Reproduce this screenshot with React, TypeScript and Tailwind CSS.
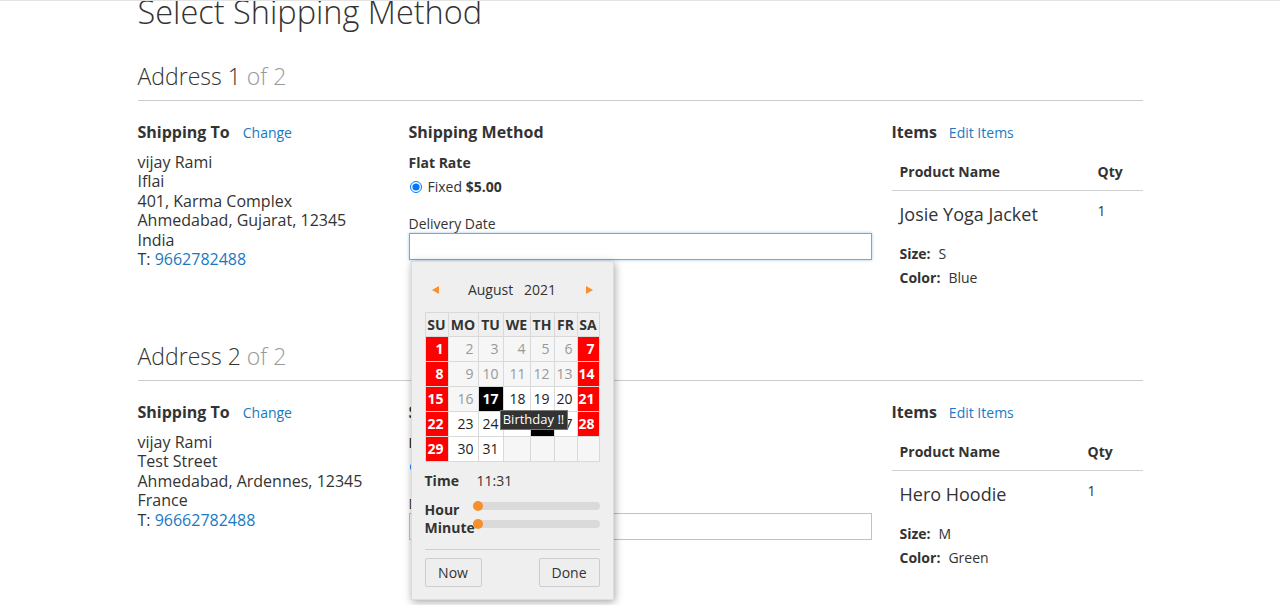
import React from "react";

// ==========================================
// Data
// ==========================================
type Addr = {
  n: number;
  lines: string[];
  phone: string;
  product: string;
  size: string;
  color: string;
  nameCol: string;
};

const addresses: Addr[] = [
  {
    n: 1,
    lines: ["vijay Rami", "Iflai", "401, Karma Complex", "Ahmedabad, Gujarat, 12345", "India"],
    phone: "9662782488",
    product: "Josie Yoga Jacket",
    size: "S",
    color: "Blue",
    nameCol: "w-[206px]",
  },
  {
    n: 2,
    lines: ["vijay Rami", "Test Street", "Ahmedabad, Ardennes, 12345", "France"],
    phone: "96662782488",
    product: "Hero Hoodie",
    size: "M",
    color: "Green",
    nameCol: "w-[196px]",
  },
];

type Cell = { d?: number; k: "red" | "off" | "on" | "black" | "empty" };

const weeks: Cell[][] = [
  [{ d: 1, k: "red" }, { d: 2, k: "off" }, { d: 3, k: "off" }, { d: 4, k: "off" }, { d: 5, k: "off" }, { d: 6, k: "off" }, { d: 7, k: "red" }],
  [{ d: 8, k: "red" }, { d: 9, k: "off" }, { d: 10, k: "off" }, { d: 11, k: "off" }, { d: 12, k: "off" }, { d: 13, k: "off" }, { d: 14, k: "red" }],
  [{ d: 15, k: "red" }, { d: 16, k: "off" }, { d: 17, k: "black" }, { d: 18, k: "on" }, { d: 19, k: "on" }, { d: 20, k: "on" }, { d: 21, k: "red" }],
  [{ d: 22, k: "red" }, { d: 23, k: "on" }, { d: 24, k: "on" }, { d: 25, k: "on" }, { d: 26, k: "black" }, { d: 27, k: "on" }, { d: 28, k: "red" }],
  [{ d: 29, k: "red" }, { d: 30, k: "on" }, { d: 31, k: "on" }, { k: "empty" }, { k: "empty" }, { k: "empty" }, { k: "empty" }],
];

const dayNames = ["SU", "MO", "TU", "WE", "TH", "FR", "SA"];
const colW = ["w-[23px]", "w-[30px]", "w-[25px]", "w-[27px]", "w-[24px]", "w-[23px]", "w-[22px]"];

const cellCls: Record<Cell["k"], string> = {
  red: "bg-[#ff0000] text-white font-bold",
  off: "bg-[#f6f6f6] text-[#999]",
  on: "bg-white text-[#222]",
  black: "bg-black text-white font-bold",
  empty: "bg-[#f6f6f6]",
};

// ==========================================
// Datepicker popup
// ==========================================
function Slider() {
  return (
    <div className="relative mt-[1px] h-[8px] flex-1 rounded-full bg-[#dadada]">
      <span className="absolute left-0 top-[-1px] h-[10px] w-[10px] rounded-full bg-[#f7902c]" />
    </div>
  );
}

function Datepicker() {
  return (
    <div className="absolute left-[2px] top-full z-10 mt-[1px] w-[203px] border border-[#dcdcdc] bg-[#efefef] px-[13px] pb-[12px] pt-[13px] shadow-[1px_2px_8px_rgba(0,0,0,0.35)]">
      <div className="flex h-[30px] items-center justify-between px-[7px]">
        <svg width="7" height="8" viewBox="0 0 7 8">
          <polygon points="7,0 7,8 0,4" fill="#f7902c" />
        </svg>
        <span className="text-[14px] text-[#333]">
          August&nbsp;&nbsp; 2021
        </span>
        <svg width="7" height="8" viewBox="0 0 7 8">
          <polygon points="0,0 0,8 7,4" fill="#f7902c" />
        </svg>
      </div>

      <div className="relative mt-[7px]">
        <table className="border-collapse text-[14px]">
          <thead>
            <tr>
              {dayNames.map((d, i) => (
                <th key={d} className={`${colW[i]} h-[24px] border border-[#d9d9d9] bg-[#efefef] p-0 text-center font-bold text-[#333]`}>
                  {d}
                </th>
              ))}
            </tr>
          </thead>
          <tbody>
            {weeks.map((w, wi) => (
              <tr key={wi}>
                {w.map((c, ci) => (
                  <td key={ci} className={`h-[25px] border border-[#d9d9d9] p-0 pr-[4px] text-right ${cellCls[c.k]}`}>
                    {c.d ?? ""}
                  </td>
                ))}
              </tr>
            ))}
          </tbody>
        </table>
        <div className="absolute left-[75px] top-[98px] flex h-[20px] w-[68px] items-center justify-center border border-[#777] bg-[#333] text-[13px] text-white">
          Birthday !!
        </div>
      </div>

      <div className="mt-[9px] flex text-[14px] leading-[20px]">
        <span className="w-[52px] font-bold">Time</span>
        <span>11:31</span>
      </div>
      <div className="mt-[10px] text-[14px] leading-[18px]">
        <div className="flex items-start">
          <span className="w-[48px] font-bold">Hour</span>
          <Slider />
        </div>
        <div className="flex items-start">
          <span className="w-[48px] font-bold">Minute</span>
          <Slider />
        </div>
      </div>

      <div className="mt-[12px] border-t border-[#cfcfcf]" />
      <div className="mt-[8px] flex justify-between">
        <button className="h-[29px] w-[57px] rounded-[2px] border border-[#cdcdcd] bg-[#eeeeee] text-[14px] text-[#333]">
          Now
        </button>
        <button className="h-[29px] w-[61px] rounded-[2px] border border-[#cdcdcd] bg-[#eeeeee] text-[14px] text-[#333]">
          Done
        </button>
      </div>
    </div>
  );
}

// ==========================================
// Address block
// ==========================================
function AddressBlock({ a, picker }: { a: Addr; picker?: boolean }) {
  return (
    <section>
      <h2 className="border-b border-[#cccccc] pb-[10px] text-[23px] font-light leading-[28px] text-[#333]">
        Address {a.n} <span className="text-[#999]">of 2</span>
      </h2>

      <div className="mt-[21px] flex">
        {/* SHIPPING TO */}
        <div className="w-[271px] shrink-0">
          <div className="flex items-baseline gap-[13px] leading-[20px]">
            <strong className="text-[16px] font-bold">Shipping To</strong>
            <a className="text-[14px] text-[#1979c3]">Change</a>
          </div>
          <address className="mt-[10px] text-[16px] not-italic leading-[19.5px]">
            {a.lines.map((l) => (
              <div key={l}>{l}</div>
            ))}
            <div>
              T: <a className="text-[#1979c3]">{a.phone}</a>
            </div>
          </address>
        </div>

        {/* SHIPPING METHOD */}
        <div className="w-[483px] shrink-0 pr-[20px]">
          <strong className="block text-[16px] font-bold leading-[20px]">Shipping Method</strong>
          <div className="mt-[11px] text-[14px] font-bold leading-[20px]">Flat Rate</div>
          <label className="mt-[4px] flex items-center gap-[6px] text-[14px] leading-[20px]">
            <input type="radio" checked readOnly className="m-0 ml-[1px] h-[12px] w-[12px]" />
            <span>
              Fixed <b>$5.00</b>
            </span>
          </label>
          <div className="mt-[17px] text-[14px] leading-[20px]">Delivery Date</div>
          <div className="relative mt-[-1px]">
            <input
              className={`block h-[27px] w-full bg-white px-2 text-[14px] outline-none ${
                picker
                  ? "border border-[#7aa7cf] shadow-[0_0_3px_rgba(104,168,224,0.6)]"
                  : "border border-[#c2c2c2]"
              }`}
              readOnly
            />
            {picker && <Datepicker />}
          </div>
        </div>

        {/* ITEMS */}
        <div className="flex-1">
          <div className="flex items-baseline gap-[12px] leading-[20px]">
            <strong className="text-[16px] font-bold">Items</strong>
            <a className="text-[14px] text-[#1979c3]">Edit Items</a>
          </div>
          <table className="mt-[10px] w-full border-collapse text-[14px] text-[#333]">
            <thead>
              <tr className="border-b border-[#d1d1d1]">
                <th className={`${a.nameCol} pb-[8px] pl-[8px] pt-[9px] text-left font-bold leading-[20px]`}>Product Name</th>
                <th className="pb-[8px] pt-[9px] text-left font-bold leading-[20px]">Qty</th>
              </tr>
            </thead>
            <tbody>
              <tr className="align-top">
                <td className="pl-[8px] pt-[11px]">
                  <div className="text-[18px] font-normal leading-[24px]">{a.product}</div>
                  <dl className="mt-[16px] leading-[24px]">
                    <div>
                      <dt className="inline font-bold">Size:</dt>
                      <dd className="ml-[8px] inline">{a.size}</dd>
                    </div>
                    <div>
                      <dt className="inline font-bold">Color:</dt>
                      <dd className="ml-[8px] inline">{a.color}</dd>
                    </div>
                  </dl>
                </td>
                <td className="pt-[10px] leading-[20px] text-[#333]">1</td>
              </tr>
            </tbody>
          </table>
        </div>
      </div>
    </section>
  );
}

// ==========================================
// Page
// ==========================================
export default function App() {
  return (
    <div className="min-h-screen overflow-hidden border-t border-[#e3e3e3] bg-white font-['Open_Sans','Liberation_Sans',sans-serif] text-[#333]">
      <main className="mx-auto w-[1005px]">
        <h1 className="mt-[-7.5px] text-[32.5px] font-light leading-[36px]">Select Shipping Method</h1>
        <div className="mt-[32px]">
          <AddressBlock a={addresses[0]} picker />
        </div>
        <div className="mt-[52px]">
          <AddressBlock a={addresses[1]} />
        </div>
      </main>
    </div>
  );
}
